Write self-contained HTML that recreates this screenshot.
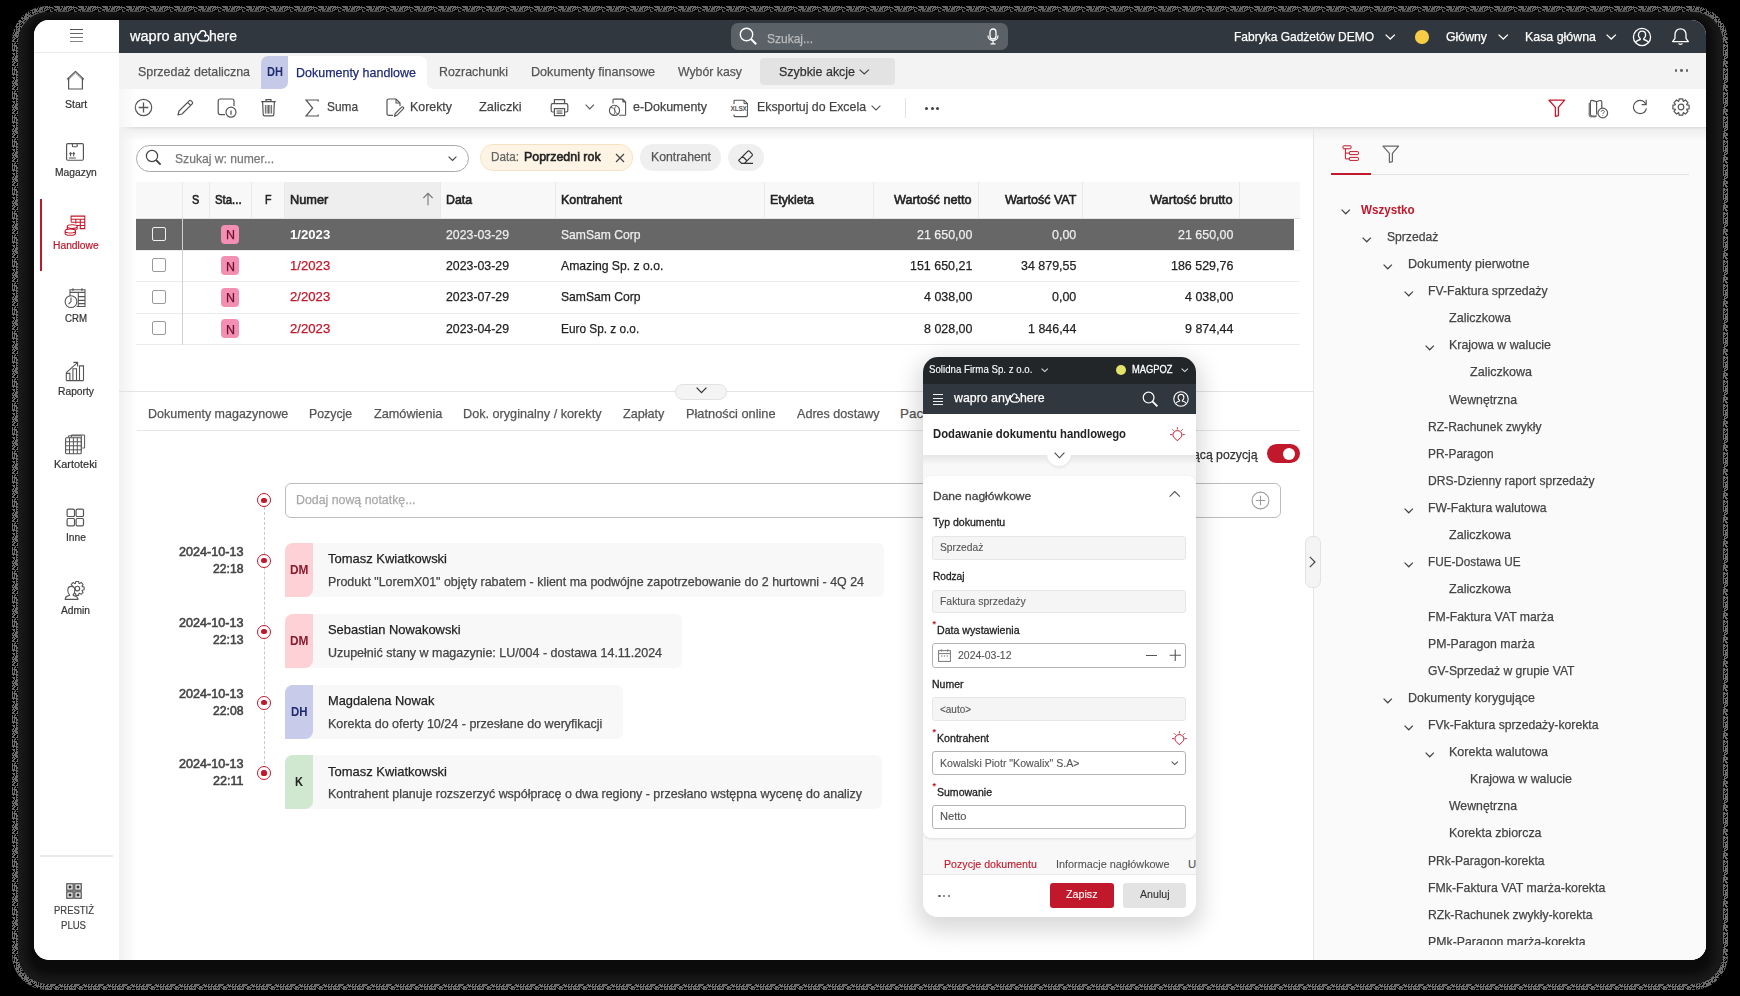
<!DOCTYPE html>
<html><head><meta charset="utf-8"><title>wapro anywhere</title>
<style>
html,body{margin:0;padding:0;background:#000;width:1740px;height:996px;overflow:hidden}
body{position:relative;font-family:"Liberation Sans",sans-serif}
.t{position:absolute;white-space:nowrap;line-height:1;transform-origin:0 0;-webkit-text-stroke:0.25px currentColor;font-family:"Liberation Sans",sans-serif}
svg{overflow:visible}
</style></head><body>
<svg style="position:absolute;left:0;top:0" width="1740" height="996"><defs><pattern id="nz" width="24" height="24" patternUnits="userSpaceOnUse"><rect width="24" height="24" fill="#6c6c6c"/><path d="M0 1h1v1h-1zM0 3h1v1h-1zM0 6h1v1h-1zM0 8h1v1h-1zM0 10h1v1h-1zM0 11h1v1h-1zM0 14h1v1h-1zM0 15h1v1h-1zM0 21h1v1h-1zM1 0h1v1h-1zM1 1h1v1h-1zM1 4h1v1h-1zM1 9h1v1h-1zM1 10h1v1h-1zM1 11h1v1h-1zM1 20h1v1h-1zM2 3h1v1h-1zM2 6h1v1h-1zM2 8h1v1h-1zM2 22h1v1h-1zM3 6h1v1h-1zM3 8h1v1h-1zM3 9h1v1h-1zM3 10h1v1h-1zM3 12h1v1h-1zM3 13h1v1h-1zM3 16h1v1h-1zM3 22h1v1h-1zM4 3h1v1h-1zM4 4h1v1h-1zM4 5h1v1h-1zM4 6h1v1h-1zM4 9h1v1h-1zM4 10h1v1h-1zM4 19h1v1h-1zM5 2h1v1h-1zM5 4h1v1h-1zM5 5h1v1h-1zM5 6h1v1h-1zM5 7h1v1h-1zM5 9h1v1h-1zM5 10h1v1h-1zM5 11h1v1h-1zM5 12h1v1h-1zM5 14h1v1h-1zM5 17h1v1h-1zM5 18h1v1h-1zM5 21h1v1h-1zM6 2h1v1h-1zM6 3h1v1h-1zM6 5h1v1h-1zM6 7h1v1h-1zM6 8h1v1h-1zM6 11h1v1h-1zM6 13h1v1h-1zM6 18h1v1h-1zM6 20h1v1h-1zM7 1h1v1h-1zM7 8h1v1h-1zM7 11h1v1h-1zM7 12h1v1h-1zM7 13h1v1h-1zM7 14h1v1h-1zM7 22h1v1h-1zM7 23h1v1h-1zM8 0h1v1h-1zM8 1h1v1h-1zM8 8h1v1h-1zM8 14h1v1h-1zM8 23h1v1h-1zM9 0h1v1h-1zM9 1h1v1h-1zM9 4h1v1h-1zM9 10h1v1h-1zM9 11h1v1h-1zM9 19h1v1h-1zM9 20h1v1h-1zM9 22h1v1h-1zM10 0h1v1h-1zM10 2h1v1h-1zM10 13h1v1h-1zM10 15h1v1h-1zM10 16h1v1h-1zM10 18h1v1h-1zM11 2h1v1h-1zM11 4h1v1h-1zM11 5h1v1h-1zM11 23h1v1h-1zM12 3h1v1h-1zM12 4h1v1h-1zM12 6h1v1h-1zM12 7h1v1h-1zM12 8h1v1h-1zM12 12h1v1h-1zM12 15h1v1h-1zM12 18h1v1h-1zM13 0h1v1h-1zM13 4h1v1h-1zM13 7h1v1h-1zM13 10h1v1h-1zM13 14h1v1h-1zM13 18h1v1h-1zM13 19h1v1h-1zM13 20h1v1h-1zM13 22h1v1h-1zM13 23h1v1h-1zM14 3h1v1h-1zM14 4h1v1h-1zM14 8h1v1h-1zM14 9h1v1h-1zM14 12h1v1h-1zM14 16h1v1h-1zM14 18h1v1h-1zM15 0h1v1h-1zM15 1h1v1h-1zM15 3h1v1h-1zM15 4h1v1h-1zM15 5h1v1h-1zM15 6h1v1h-1zM15 7h1v1h-1zM15 13h1v1h-1zM15 15h1v1h-1zM15 16h1v1h-1zM15 17h1v1h-1zM15 20h1v1h-1zM15 23h1v1h-1zM16 14h1v1h-1zM16 15h1v1h-1zM16 16h1v1h-1zM16 18h1v1h-1zM16 19h1v1h-1zM16 20h1v1h-1zM17 1h1v1h-1zM17 4h1v1h-1zM17 6h1v1h-1zM17 10h1v1h-1zM17 14h1v1h-1zM17 18h1v1h-1zM17 20h1v1h-1zM17 21h1v1h-1zM17 22h1v1h-1zM18 0h1v1h-1zM18 1h1v1h-1zM18 3h1v1h-1zM18 13h1v1h-1zM18 16h1v1h-1zM18 22h1v1h-1zM19 8h1v1h-1zM19 9h1v1h-1zM19 10h1v1h-1zM19 12h1v1h-1zM19 19h1v1h-1zM20 1h1v1h-1zM20 3h1v1h-1zM20 4h1v1h-1zM20 5h1v1h-1zM20 7h1v1h-1zM20 17h1v1h-1zM20 18h1v1h-1zM20 19h1v1h-1zM20 23h1v1h-1zM21 0h1v1h-1zM21 1h1v1h-1zM21 9h1v1h-1zM21 11h1v1h-1zM21 14h1v1h-1zM21 19h1v1h-1zM21 20h1v1h-1zM21 22h1v1h-1zM22 0h1v1h-1zM22 3h1v1h-1zM22 8h1v1h-1zM22 11h1v1h-1zM22 12h1v1h-1zM22 16h1v1h-1zM22 20h1v1h-1zM22 23h1v1h-1zM23 10h1v1h-1zM23 11h1v1h-1zM23 12h1v1h-1zM23 16h1v1h-1zM23 17h1v1h-1zM23 19h1v1h-1z" fill="#000"/></pattern></defs><rect x="12" y="6" width="1716" height="984" rx="35" fill="url(#nz)"/></svg>
<div style="position:absolute;left:17.5px;top:11.5px;width:1705px;height:972px;border-radius:30px;background:#1a1a1a"></div>
<div style="position:absolute;left:26px;top:14px;width:1688px;height:962px;border-radius:22px;background:#0b0b0b;filter:blur(4px)"></div>
<div id="win" style="position:absolute;left:34px;top:20px;width:1672px;height:940px;border-radius:15px;overflow:hidden;background:#fff">
<div style="position:absolute;left:-34px;top:-20px;width:1740px;height:996px">
<div style="position:absolute;left:34px;top:20px;width:85px;height:940px;background:#fff;"></div>
<div style="position:absolute;left:34px;top:52px;width:85px;height:1px;background:#ececec;"></div>
<div style="position:absolute;left:70px;top:29px;width:13px;height:1.3999999999999986px;background:#555;"></div>
<div style="position:absolute;left:70px;top:33px;width:13px;height:1.3999999999999986px;background:#666;"></div>
<div style="position:absolute;left:70px;top:37px;width:13px;height:1.3999999999999986px;background:#777;"></div>
<div style="position:absolute;left:70px;top:41px;width:13px;height:1.3999999999999986px;background:#888;"></div>
<div style="position:absolute;left:119px;top:53px;width:1587px;height:907px;background:#fff;"></div>
<div style="position:absolute;left:119px;top:20px;width:1587px;height:33px;background:#31373e;"></div>
<span class="t" style="left:129.70px;top:27.75px;font-size:15.5px;color:#fff;transform:scaleX(0.9369);">wapro any</span>
<span class="t" style="left:209.30px;top:27.75px;font-size:15.5px;color:#fff;transform:scaleX(0.9026);">here</span>
<svg style="position:absolute;left:197px;top:31px;" width="12" height="10" viewBox="0 0 12 10" fill="none"><path d="M4.2 9.9 A4 4 0 0 1 2.9 2.2 A2.9 2.9 0 0 1 8.7 3.2 A2.9 2.9 0 0 1 7.9 5.4 M7.6 4.3 A3 3 0 1 1 8 9.9 L4.2 9.9" stroke="#fff" stroke-width="1.4" stroke-linecap="round"/></svg>
<div style="position:absolute;left:731px;top:23px;width:277px;height:27px;border-radius:7px;background:#5b6267"></div>
<svg style="position:absolute;left:739px;top:27px;" width="19" height="19" viewBox="0 0 19 19" fill="none"><circle cx="7.5" cy="7.5" r="6.2" stroke="#fff" stroke-width="1.4"/><path d="M12 12 L17.2 17.2" stroke="#fff" stroke-width="2"/></svg>
<span class="t" style="left:767.00px;top:31.80px;font-size:13.4px;color:#b9bcbe;transform:scaleX(0.8958);">Szukaj...</span>
<svg style="position:absolute;left:987px;top:28px;" width="12" height="17" viewBox="0 0 12 17" fill="none"><rect x="3" y="1" width="6" height="10" rx="3" stroke="#fff" stroke-width="1.3"/><path d="M1 7.5 C1 10.5 3.2 12.5 6 12.5 C8.8 12.5 11 10.5 11 7.5 M6 12.5 V15.5 M3.5 15.8 H8.5" stroke="#fff" stroke-width="1.2"/></svg>
<span class="t" style="left:1234.00px;top:29.80px;font-size:13.4px;color:#fff;transform:scaleX(0.8959);">Fabryka Gadżetów DEMO</span>
<svg style="position:absolute;left:1385px;top:34px;" width="10.5" height="5.6" viewBox="0 0 10.5 5.6" fill="none"><path d="M0.6 0.6 L5.25 5.0 L9.9 0.6" stroke="#fff" stroke-width="1.3"/></svg>
<div style="position:absolute;left:1415px;top:30px;width:13.5px;height:13.5px;border-radius:50%;background:#f8cd46"></div>
<span class="t" style="left:1446.00px;top:29.80px;font-size:13.4px;color:#fff;transform:scaleX(0.9182);">Główny</span>
<svg style="position:absolute;left:1498px;top:34px;" width="10.5" height="5.6" viewBox="0 0 10.5 5.6" fill="none"><path d="M0.6 0.6 L5.25 5.0 L9.9 0.6" stroke="#fff" stroke-width="1.3"/></svg>
<span class="t" style="left:1524.50px;top:29.80px;font-size:13.4px;color:#fff;transform:scaleX(0.9260);">Kasa główna</span>
<svg style="position:absolute;left:1606px;top:34px;" width="10.5" height="5.6" viewBox="0 0 10.5 5.6" fill="none"><path d="M0.6 0.6 L5.25 5.0 L9.9 0.6" stroke="#fff" stroke-width="1.3"/></svg>
<svg style="position:absolute;left:1632px;top:27px;" width="20" height="20" viewBox="0 0 20 20" fill="none"><circle cx="10" cy="10" r="8.6" stroke="#fff" stroke-width="1.3"/><path d="M10 4.2 C7.6 4.2 6.4 6 6.4 8 C6.4 9.8 7.3 11 8.2 11.6 L8.2 12.5 C6.2 13 4.6 13.8 3.6 15.4 M10 4.2 C12.4 4.2 13.6 6 13.6 8 C13.6 9.8 12.7 11 11.8 11.6 L11.8 12.5 C13.8 13 15.4 13.8 16.4 15.4" stroke="#fff" stroke-width="1.3"/></svg>
<svg style="position:absolute;left:1671px;top:27px;" width="19" height="19" viewBox="0 0 19 19" fill="none"><path d="M9.5 1.8 C6 1.8 4 4.4 4 7.6 L4 11.4 L1.6 14.6 L17.4 14.6 L15 11.4 L15 7.6 C15 4.4 13 1.8 9.5 1.8 Z" stroke="#fff" stroke-width="1.3" stroke-linejoin="round"/><path d="M7.6 16.4 C8 17.6 11 17.6 11.4 16.4" stroke="#fff" stroke-width="1.3"/></svg>
<div style="position:absolute;left:119px;top:53px;width:1587px;height:36px;background:#f3f3f3;"></div>
<span class="t" style="left:137.50px;top:64.80px;font-size:13.4px;color:#555;transform:scaleX(0.9288);">Sprzedaż detaliczna</span>
<div style="position:absolute;left:261px;top:56px;width:166px;height:40px;border-radius:7px 7px 0 0;background:#fff"></div>
<div style="position:absolute;left:261px;top:56px;width:27px;height:32.5px;border-radius:7px 0 7px 0;background:#c6cae9"></div>
<div style="position:absolute;left:427px;top:80px;width:9px;height:9px;background:#fff;"></div>
<div style="position:absolute;left:427px;top:70px;width:14px;height:19px;border-radius:0 0 0 7px;background:#f3f3f3"></div>
<span class="t" style="left:267.00px;top:66.30px;font-size:12.4px;color:#1f2a6c;font-weight:700;-webkit-text-stroke:0;transform:scaleX(0.8940);">DH</span>
<span class="t" style="left:296.00px;top:65.50px;font-size:13.4px;color:#1e2a78;transform:scaleX(0.9319);">Dokumenty handlowe</span>
<span class="t" style="left:439.00px;top:64.80px;font-size:13.4px;color:#555;transform:scaleX(0.9271);">Rozrachunki</span>
<span class="t" style="left:531.00px;top:64.80px;font-size:13.4px;color:#555;transform:scaleX(0.9412);">Dokumenty finansowe</span>
<span class="t" style="left:678.00px;top:64.80px;font-size:13.4px;color:#555;transform:scaleX(0.9166);">Wybór kasy</span>
<div style="position:absolute;left:760px;top:58px;width:135px;height:26.5px;border-radius:4px;background:#e3e3e3"></div>
<span class="t" style="left:779.00px;top:64.80px;font-size:13.4px;color:#333;transform:scaleX(0.9283);">Szybkie akcje</span>
<svg style="position:absolute;left:858.5px;top:68.5px;" width="10.5" height="5.6" viewBox="0 0 10.5 5.6" fill="none"><path d="M0.6 0.6 L5.25 5.0 L9.9 0.6" stroke="#444" stroke-width="1.2"/></svg>
<div style="position:absolute;left:1674.6499999999999px;top:69.3px;width:2.3px;height:2.3px;border-radius:50%;background:#666"></div>
<div style="position:absolute;left:1680.35px;top:69.3px;width:2.3px;height:2.3px;border-radius:50%;background:#666"></div>
<div style="position:absolute;left:1686.05px;top:69.3px;width:2.3px;height:2.3px;border-radius:50%;background:#666"></div>
<div style="position:absolute;left:119px;top:89px;width:1587px;height:38px;background:#fff;"></div>
<div style="position:absolute;left:119px;top:127px;width:1587px;height:14px;background:linear-gradient(#dcdcdc 0px,#e6e6e6 1.5px,#f0f0f0 3px,rgba(250,250,250,0) 14px)"></div>
<svg style="position:absolute;left:134px;top:98px;" width="19" height="19" viewBox="0 0 19 19" fill="none"><circle cx="9.5" cy="9.5" r="8.2" stroke="#555" stroke-width="1.2"/><path d="M9.5 4.6 V14.4 M4.6 9.5 H14.4" stroke="#555" stroke-width="1.3"/></svg>
<svg style="position:absolute;left:176px;top:99px;" width="18" height="18" viewBox="0 0 18 18" fill="none"><path d="M2 16 L3 12 L13.2 1.8 C13.8 1.2 14.6 1.2 15.2 1.8 L16.2 2.8 C16.8 3.4 16.8 4.2 16.2 4.8 L6 15 Z M11.6 3.4 L14.6 6.4" stroke="#555" stroke-width="1.2" stroke-linejoin="round"/></svg>
<svg style="position:absolute;left:217px;top:98px;" width="21" height="20" viewBox="0 0 21 20" fill="none"><path d="M8 16.6 H3.2 C2 16.6 1.2 15.8 1.2 14.6 V3 C1.2 1.8 2 1 3.2 1 H15 C16.2 1 17 1.8 17 3 V8" stroke="#555" stroke-width="1.2"/><circle cx="14" cy="14.2" r="5" stroke="#555" stroke-width="1.2"/><path d="M14 12.4 V16.8" stroke="#555" stroke-width="1.3"/></svg>
<svg style="position:absolute;left:260px;top:98px;" width="17" height="19" viewBox="0 0 17 19" fill="none"><path d="M1.2 3.6 H15.8 M6 3.4 V1.6 H11 V3.4 M2.6 3.6 L3.2 16.4 C3.2 17.2 3.8 17.8 4.6 17.8 H12.4 C13.2 17.8 13.8 17.2 13.8 16.4 L14.4 3.6" stroke="#555" stroke-width="1.2"/><path d="M5.4 7 V15.6 M7.1 7 V15.6 M8.5 7 V15.6 M9.9 7 V15.6 M11.6 7 V15.6" stroke="#555" stroke-width="0.9"/></svg>
<svg style="position:absolute;left:305px;top:98.5px;" width="14" height="18" viewBox="0 0 14 18" fill="none"><path d="M13.2 2.4 V1 H1 L7.6 9 L1 17 H13.2 V15.6" stroke="#555" stroke-width="1.2"/></svg>
<span class="t" style="left:327.00px;top:100.20px;font-size:13.4px;color:#444;transform:scaleX(0.8862);">Suma</span>
<svg style="position:absolute;left:386px;top:98px;" width="19" height="19" viewBox="0 0 19 19" fill="none"><path d="M7 17.4 H2.8 C1.8 17.4 1 16.6 1 15.6 V2.8 C1 1.8 1.8 1 2.8 1 H10 L14 5 V8" stroke="#555" stroke-width="1.2"/><path d="M10 1 V5 H14" stroke="#555" stroke-width="1.1"/><path d="M8.6 18.2 L9.2 15.6 L15.6 9.2 C16.1 8.7 16.8 8.7 17.3 9.2 C17.8 9.7 17.8 10.4 17.3 10.9 L10.9 17.3 Z" stroke="#555" stroke-width="1.2"/></svg>
<span class="t" style="left:410.00px;top:100.20px;font-size:13.4px;color:#444;transform:scaleX(0.9252);">Korekty</span>
<span class="t" style="left:479.00px;top:100.20px;font-size:13.4px;color:#444;transform:scaleX(0.9544);">Zaliczki</span>
<svg style="position:absolute;left:550px;top:98px;" width="19" height="19" viewBox="0 0 19 19" fill="none"><path d="M4.4 5.6 V1.6 H14.6 V5.6 M4.2 14 H2.6 C1.8 14 1.2 13.4 1.2 12.6 V7.2 C1.2 6.4 1.8 5.6 2.6 5.6 H16.4 C17.2 5.6 17.8 6.4 17.8 7.2 V12.6 C17.8 13.4 17.2 14 16.4 14 H14.8 M4.4 10.6 H14.6 V17.6 H4.4 Z M6.6 13 H12.4 M6.6 15.2 H12.4" stroke="#555" stroke-width="1.2"/></svg>
<svg style="position:absolute;left:585px;top:104px;" width="9.5" height="5.5" viewBox="0 0 9.5 5.5" fill="none"><path d="M0.6 0.6 L4.75 4.9 L8.9 0.6" stroke="#555" stroke-width="1.1"/></svg>
<svg style="position:absolute;left:608px;top:98px;" width="20" height="20" viewBox="0 0 20 20" fill="none"><path d="M5 5.6 V1.8 C5 1.4 5.3 1.1 5.7 1.1 H14.8 L17.6 3.9 V16.6 C17.6 17 17.3 17.3 16.9 17.3 H11.2 M14.8 1.1 V3.2 C14.8 3.6 15.1 3.9 15.5 3.9 H17.6" stroke="#555" stroke-width="1.1"/><circle cx="6.5" cy="12.4" r="5.1" stroke="#555" stroke-width="1.1"/><path d="M2.6 9.4 C4.6 9.6 6.6 10.6 7 12.2 C7.4 14 6.6 15.6 5.4 17.2 M8.6 7.6 C7.2 8.8 6.2 10.4 6.6 12.4 C7 14 8.4 15.2 9.8 16" stroke="#555" stroke-width="0.9"/></svg>
<span class="t" style="left:633.00px;top:100.20px;font-size:13.4px;color:#444;transform:scaleX(0.9293);">e-Dokumenty</span>
<svg style="position:absolute;left:730px;top:99px;" width="20" height="19" viewBox="0 0 20 19" fill="none"><path d="M4 5 V2.2 C4 1.6 4.4 1.2 5 1.2 H14 L17.4 4.6 V16.6 C17.4 17.2 17 17.6 16.4 17.6 H5 C4.4 17.6 4 17.2 4 16.6 V15.4" stroke="#555" stroke-width="1.1"/><path d="M14 1.2 V4.6 H17.4" stroke="#555" stroke-width="1"/></svg>
<div style="position:absolute;left:730px;top:105px;font:bold 6.5px 'Liberation Sans',sans-serif;color:#555;letter-spacing:-0.2px;background:#fff;line-height:7px;padding:0 0.5px">XLSX</div>
<span class="t" style="left:757.00px;top:100.20px;font-size:13.4px;color:#444;transform:scaleX(0.9210);">Eksportuj do Excela</span>
<svg style="position:absolute;left:871px;top:104.5px;" width="10" height="5.5" viewBox="0 0 10 5.5" fill="none"><path d="M0.6 0.6 L5.0 4.9 L9.4 0.6" stroke="#555" stroke-width="1.1"/></svg>
<div style="position:absolute;left:905px;top:97.5px;width:1px;height:20.0px;background:#e2e2e2;"></div>
<div style="position:absolute;left:925.0px;top:106.5px;width:3px;height:3px;border-radius:50%;background:#444"></div>
<div style="position:absolute;left:930.5px;top:106.5px;width:3px;height:3px;border-radius:50%;background:#444"></div>
<div style="position:absolute;left:936.0px;top:106.5px;width:3px;height:3px;border-radius:50%;background:#444"></div>
<svg style="position:absolute;left:1548px;top:98.5px;" width="18" height="18" viewBox="0 0 18 18" fill="none"><path d="M1 1.2 H16.6 L10.4 8.4 V16.6 L7.4 17.4 V8.4 Z" stroke="#c1182b" stroke-width="1.3" stroke-linejoin="round"/></svg>
<svg style="position:absolute;left:1588px;top:98.5px;" width="21" height="19" viewBox="0 0 21 19" fill="none"><path d="M2.4 3 V15.6 C2.4 16.6 3.2 17 4 17 H9 M2.4 3 C2.4 1.6 3.8 1.2 5 1.6 L8.6 2.8 V15.6 M8.6 2.8 L11 1.8 C12.4 1.2 13.8 1.6 13.8 3 V9.6" stroke="#555" stroke-width="1.2"/><path d="M1.2 4 V16.6 C1.2 17.4 1.8 17.8 2.6 17.8 H8" stroke="#555" stroke-width="1"/><circle cx="14.8" cy="14" r="4.8" stroke="#555" stroke-width="1.2"/><path d="M13.2 12.8 C13.2 11.8 13.9 11.3 14.8 11.3 C15.7 11.3 16.4 11.9 16.4 12.7 C16.4 13.7 14.8 13.8 14.8 15 M14.8 16.2 V16.9" stroke="#555" stroke-width="1"/></svg>
<svg style="position:absolute;left:1632px;top:99px;" width="16" height="16" viewBox="0 0 16 16" fill="none"><path d="M13.6 5 C12.4 2.6 10.4 1.4 8 1.4 C4.4 1.4 1.4 4.4 1.4 8 C1.4 11.6 4.4 14.6 8 14.6 C11.2 14.6 13.8 12.4 14.4 9.4" stroke="#555" stroke-width="1.2"/><path d="M14.2 0.8 V5.6 H9.6" stroke="#555" stroke-width="1.2"/></svg>
<svg style="position:absolute;left:1672px;top:98px;" width="18" height="18" viewBox="0 0 18 18" fill="none"><path d="M17.10 7.19 L17.10 10.81 L14.80 11.18 L14.65 11.56 L16.01 13.45 L13.45 16.01 L11.56 14.65 L11.18 14.80 L10.81 17.10 L7.19 17.10 L6.82 14.80 L6.44 14.65 L4.55 16.01 L1.99 13.45 L3.35 11.56 L3.20 11.18 L0.90 10.81 L0.90 7.19 L3.20 6.82 L3.35 6.44 L1.99 4.55 L4.55 1.99 L6.44 3.35 L6.82 3.20 L7.19 0.90 L10.81 0.90 L11.18 3.20 L11.56 3.35 L13.45 1.99 L16.01 4.55 L14.65 6.44 L14.80 6.82 Z" stroke="#555" stroke-width="1.2" stroke-linejoin="round"/><circle cx="9" cy="9" r="2.8" stroke="#555" stroke-width="1.2"/></svg>
<svg style="position:absolute;left:66px;top:70px;" width="19" height="20" viewBox="0 0 19 20" fill="none"><path d="M1 9.4 L9.5 1.4 L18 9.4 M2.6 8 V19 H16.4 V8" stroke="#555" stroke-width="1.2" stroke-linejoin="round"/><path d="M1.8 10.4 L9.5 3 L17.2 10.4" stroke="#555" stroke-width="0.7"/></svg>
<span class="t" style="left:64.85px;top:99.80px;font-size:10px;color:#333;-webkit-text-stroke:0.2px currentColor;transform:scaleX(1.0560);">Start</span>
<svg style="position:absolute;left:66px;top:143.1px;" width="18" height="18" viewBox="0 0 18 18" fill="none"><rect x="0.6" y="0.6" width="16.8" height="16.6" rx="1.2" stroke="#555" stroke-width="1.15"/><path d="M6.4 0.8 V3 C6.4 3.5 6.7 3.8 7.2 3.8 H10.4 C10.9 3.8 11.2 3.5 11.2 3 V0.8" stroke="#555" stroke-width="1.1"/><path d="M4.6 13.3 V9.8 M7.7 13.3 V9.8 M3.5 11 L4.6 9.6 L5.7 11 M6.6 11 L7.7 9.6 L8.8 11" stroke="#555" stroke-width="1.1"/><path d="M3.4 15 H9.4" stroke="#555" stroke-width="1.2" stroke-linecap="round"/></svg>
<span class="t" style="left:54.80px;top:167.80px;font-size:10px;color:#333;-webkit-text-stroke:0.2px currentColor;transform:scaleX(1.0302);">Magazyn</span>
<svg style="position:absolute;left:64px;top:215px;" width="22" height="21" viewBox="0 0 22 21" fill="none"><path d="M7.1 6.8 V1.1 H20.8 V13.6 H15.6 M7.1 4.3 H20.8 M7.1 7.3 H20.8 M11.8 4.3 V8.6 M16.3 4.3 V13.6 M13 10.4 H20.8" stroke="#c1182b" stroke-width="1.05"/><path d="M3.2 11.6 V13.4 C3.2 14.5 5.4 15.3 8.2 15.3 C11 15.3 13.2 14.5 13.2 13.4 V11.6 C13.2 10.5 11 9.7 8.2 9.7 C5.4 9.7 3.2 10.5 3.2 11.6 C3.2 12.7 5.4 13.5 8.2 13.5 C11 13.5 13.2 12.7 13.2 11.6" fill="#fff" stroke="#c1182b" stroke-width="1.05"/><path d="M1.1 15.9 V18.2 C1.1 19.3 3.4 20.3 6.3 20.3 C9.2 20.3 11.5 19.3 11.5 18.2 V15.9 C11.5 14.8 9.2 13.9 6.3 13.9 C3.4 13.9 1.1 14.8 1.1 15.9 C1.1 17 3.4 17.9 6.3 17.9 C9.2 17.9 11.5 17 11.5 15.9" fill="#fff" stroke="#c1182b" stroke-width="1.05"/></svg>
<span class="t" style="left:52.75px;top:240.50px;font-size:10px;color:#c1182b;-webkit-text-stroke:0.2px currentColor;transform:scaleX(1.0276);">Handlowe</span>
<div style="position:absolute;left:40px;top:199px;width:2px;height:72px;background:#c1182b;"></div>
<svg style="position:absolute;left:64px;top:288px;" width="22" height="21" viewBox="0 0 22 21" fill="none"><path d="M6 8 V1.8 H21 V18.5 H12.6 M6 4.4 H21 M9 0.2 V3 M18 0.2 V3 M14.3 4.4 V18.5 M14.3 8.6 H21 M14.3 12.4 H21 M14.3 15.6 H21" stroke="#555" stroke-width="1.1"/><circle cx="7" cy="13.6" r="5.9" fill="#fff" stroke="#555" stroke-width="1.1"/><path d="M7 9.4 V13.6 L4.6 16.2" stroke="#555" stroke-width="1.1"/></svg>
<span class="t" style="left:64.50px;top:313.50px;font-size:10px;color:#333;-webkit-text-stroke:0.2px currentColor;transform:scaleX(0.9660);">CRM</span>
<svg style="position:absolute;left:65px;top:361px;" width="21" height="21" viewBox="0 0 21 21" fill="none"><path d="M1.3 19.6 V12.4 H4.9 V19.6 M7.9 19.6 V7.8 H11.5 V19.6 M14.5 19.6 V4.9 H18.5 V19.6 M1.3 19.6 H18.5 M1.3 11.6 L12.2 1.8 M8.4 1.4 H12.6 V5.6" stroke="#555" stroke-width="1.1"/></svg>
<span class="t" style="left:57.50px;top:386.50px;font-size:10px;color:#333;-webkit-text-stroke:0.2px currentColor;transform:scaleX(1.0281);">Raporty</span>
<svg style="position:absolute;left:65px;top:434px;" width="21" height="21" viewBox="0 0 21 21" fill="none"><path d="M6.4 3.4 V1 H19.6 V14 H17.4 M3.4 3.8 V1.8 H16.4 V16.2 H16.2" stroke="#555" stroke-width="1"/><rect x="0.6" y="3.8" width="15.6" height="16" rx="1" fill="#fff" stroke="#555" stroke-width="1.1"/><path d="M0.6 7.8 H16.2 M0.6 11.8 H16.2 M0.6 15.8 H16.2 M4.5 3.8 V19.8 M8.4 3.8 V19.8 M12.3 3.8 V19.8" stroke="#555" stroke-width="1"/></svg>
<span class="t" style="left:54.00px;top:459.50px;font-size:10px;color:#333;-webkit-text-stroke:0.2px currentColor;transform:scaleX(1.0896);">Kartoteki</span>
<svg style="position:absolute;left:65.5px;top:507.5px;" width="19" height="19" viewBox="0 0 19 19" fill="none"><rect x="1.1" y="1.1" width="7.4" height="7.4" rx="1.3" stroke="#555" stroke-width="1.2"/><rect x="10.1" y="1.1" width="7.4" height="7.4" rx="1.3" stroke="#555" stroke-width="1.2"/><rect x="1.1" y="10.5" width="7.4" height="7.4" rx="1.3" stroke="#555" stroke-width="1.2"/><rect x="10.1" y="10.5" width="7.4" height="7.4" rx="1.3" stroke="#555" stroke-width="1.2"/></svg>
<span class="t" style="left:65.50px;top:532.50px;font-size:10px;color:#333;-webkit-text-stroke:0.2px currentColor;transform:scaleX(1.0276);">Inne</span>
<svg style="position:absolute;left:64px;top:579px;" width="22" height="22" viewBox="0 0 22 22" fill="none"><path d="M20.16 7.99 L20.16 10.81 L18.20 11.17 L17.98 11.68 L19.12 13.32 L17.12 15.32 L15.48 14.18 L14.97 14.40 L14.61 16.36 L11.79 16.36 L11.43 14.40 L10.92 14.18 L9.28 15.32 L7.28 13.32 L8.42 11.68 L8.20 11.17 L6.24 10.81 L6.24 7.99 L8.20 7.63 L8.42 7.12 L7.28 5.48 L9.28 3.48 L10.92 4.62 L11.43 4.40 L11.79 2.44 L14.61 2.44 L14.97 4.40 L15.48 4.62 L17.12 3.48 L19.12 5.48 L17.98 7.12 L18.20 7.63 Z" fill="#fff" stroke="#555" stroke-width="1.05" stroke-linejoin="round"/><circle cx="13.4" cy="9.6" r="2.3" stroke="#555" stroke-width="1.1"/><path d="M5.4 15.4 C4 14.4 3.8 12.6 3.8 11.2 C3.8 9 5.2 7.4 7.3 7.4 C9.4 7.4 10.8 9 10.8 11.2 C10.8 12.6 10.6 14.4 9.2 15.4 V16.4 C11.6 16.9 13.8 17.8 14 20.4 H1.2 C1.2 17.8 3 16.9 5.4 16.4 Z" fill="#fff" stroke="#555" stroke-width="1.1" stroke-linejoin="round"/></svg>
<span class="t" style="left:61.00px;top:605.50px;font-size:10px;color:#333;-webkit-text-stroke:0.2px currentColor;transform:scaleX(1.0231);">Admin</span>
<div style="position:absolute;left:40px;top:855px;width:73px;height:1.5px;background:#eaeaea;"></div>
<svg style="position:absolute;left:66px;top:883px;" width="16" height="16" viewBox="0 0 16 16" fill="none"><rect x="0.8" y="0.8" width="6.4" height="6.4" stroke="#555" stroke-width="1.3"/><rect x="8.8" y="0.8" width="6.4" height="6.4" stroke="#555" stroke-width="1.3"/><rect x="0.8" y="8.8" width="6.4" height="6.4" stroke="#555" stroke-width="1.3"/><rect x="8.8" y="8.8" width="6.4" height="6.4" stroke="#555" stroke-width="1.3"/><rect x="2.6" y="2.6" width="2.8" height="2.8" fill="#333"/><rect x="10.6" y="2.6" width="2.8" height="2.8" fill="#333"/><rect x="2.6" y="10.6" width="2.8" height="2.8" fill="#333"/><rect x="10.6" y="10.6" width="2.8" height="2.8" fill="#333"/></svg>
<span class="t" style="left:53.50px;top:906.00px;font-size:10px;color:#444;-webkit-text-stroke:0.2px currentColor;transform:scaleX(0.9473);">PRESTIŻ</span>
<span class="t" style="left:60.50px;top:920.50px;font-size:10px;color:#444;-webkit-text-stroke:0.2px currentColor;transform:scaleX(0.9570);">PLUS</span>
<div style="position:absolute;left:119px;top:127px;width:18px;height:833px;background:linear-gradient(90deg,#f1f1f1,rgba(255,255,255,0))"></div>
<div style="position:absolute;left:119px;top:89px;width:18px;height:38px;background:linear-gradient(90deg,#f6f6f6,rgba(255,255,255,0))"></div>
<div style="position:absolute;left:136px;top:145px;width:331px;height:25px;border:1px solid #a9a9a9;border-radius:14px;background:#fff"></div>
<svg style="position:absolute;left:145px;top:149px;" width="18" height="18" viewBox="0 0 18 18" fill="none"><circle cx="7" cy="7" r="5.6" stroke="#444" stroke-width="1.2"/><path d="M11 11 L15.6 15.6" stroke="#444" stroke-width="1.9"/></svg>
<span class="t" style="left:175.00px;top:151.70px;font-size:13.4px;color:#777;transform:scaleX(0.9049);">Szukaj w: numer...</span>
<svg style="position:absolute;left:448px;top:155.5px;" width="9" height="5" viewBox="0 0 9 5" fill="none"><path d="M0.6 0.6 L4.5 4.4 L8.4 0.6" stroke="#444" stroke-width="1.1"/></svg>
<div style="position:absolute;left:480px;top:144px;width:151px;height:24.5px;border:1px solid #f5e2c2;border-radius:13px;background:#fdf4e5"></div>
<span class="t" style="left:491.00px;top:150.20px;font-size:13.4px;color:#666;transform:scaleX(0.8749);">Data:</span>
<span class="t" style="left:524.00px;top:150.20px;font-size:13.4px;color:#222;-webkit-text-stroke:0.6px currentColor;transform:scaleX(0.9271);">Poprzedni rok</span>
<svg style="position:absolute;left:615px;top:153px;" width="10" height="10" viewBox="0 0 10 10" fill="none"><path d="M1 1 L9 9 M9 1 L1 9" stroke="#444" stroke-width="1.2"/></svg>
<div style="position:absolute;left:640px;top:144px;width:81px;height:26.5px;border-radius:13px;background:#efefef"></div>
<span class="t" style="left:651.00px;top:150.20px;font-size:13.4px;color:#555;transform:scaleX(0.9158);">Kontrahent</span>
<div style="position:absolute;left:728px;top:144px;width:35.5px;height:27px;border-radius:14px;background:#efefef"></div>
<svg style="position:absolute;left:736px;top:148px;" width="19" height="19" viewBox="0 0 19 19" fill="none"><path d="M3.4 11.6 L11.6 3.4 C12.2 2.8 13 2.8 13.6 3.4 L16 5.8 C16.6 6.4 16.6 7.2 16 7.8 L8.4 15.4 H5.6 L2.8 12.6 C2.6 12.4 2.8 12 3.4 11.6 Z M6.6 8.4 L11.2 13 M8.8 15.4 H17" stroke="#333" stroke-width="1.2" stroke-linejoin="round"/></svg>
<div style="position:absolute;left:136px;top:182px;width:1164px;height:36px;background:#f8f8f8;"></div>
<div style="position:absolute;left:284px;top:182px;width:156px;height:36px;background:#eeeeee;"></div>
<div style="position:absolute;left:182px;top:182px;width:1px;height:36px;background:#e9e9e9;"></div>
<div style="position:absolute;left:209px;top:182px;width:1px;height:36px;background:#e9e9e9;"></div>
<div style="position:absolute;left:250.5px;top:182px;width:1.0px;height:36px;background:#e9e9e9;"></div>
<div style="position:absolute;left:284px;top:182px;width:1px;height:36px;background:#e9e9e9;"></div>
<div style="position:absolute;left:440px;top:182px;width:1px;height:36px;background:#e9e9e9;"></div>
<div style="position:absolute;left:555px;top:182px;width:1px;height:36px;background:#e9e9e9;"></div>
<div style="position:absolute;left:764px;top:182px;width:1px;height:36px;background:#e9e9e9;"></div>
<div style="position:absolute;left:873px;top:182px;width:1px;height:36px;background:#e9e9e9;"></div>
<div style="position:absolute;left:977.5px;top:182px;width:1.0px;height:36px;background:#e9e9e9;"></div>
<div style="position:absolute;left:1081.5px;top:182px;width:1.0px;height:36px;background:#e9e9e9;"></div>
<div style="position:absolute;left:1238.5px;top:182px;width:1.0px;height:36px;background:#e9e9e9;"></div>
<div style="position:absolute;left:136px;top:217.5px;width:1164px;height:1.0px;background:#e2e2e2;"></div>
<span class="t" style="left:192.20px;top:192.80px;font-size:13.4px;color:#222;-webkit-text-stroke:0.6px currentColor;transform:scaleX(0.8173);">S</span>
<span class="t" style="left:215.00px;top:192.80px;font-size:13.4px;color:#222;-webkit-text-stroke:0.6px currentColor;transform:scaleX(0.8509);">Sta...</span>
<span class="t" style="left:264.50px;top:192.80px;font-size:13.4px;color:#222;-webkit-text-stroke:0.6px currentColor;transform:scaleX(0.7947);">F</span>
<span class="t" style="left:289.60px;top:192.80px;font-size:13.4px;color:#222;-webkit-text-stroke:0.6px currentColor;transform:scaleX(0.9532);">Numer</span>
<svg style="position:absolute;left:422px;top:192px;" width="12" height="14" viewBox="0 0 12 14" fill="none"><path d="M6 13.2 V1.4 M1.4 6 L6 1.4 L10.6 6" stroke="#777" stroke-width="1.1"/></svg>
<span class="t" style="left:446.00px;top:192.80px;font-size:13.4px;color:#222;-webkit-text-stroke:0.6px currentColor;transform:scaleX(0.9192);">Data</span>
<span class="t" style="left:561.00px;top:192.80px;font-size:13.4px;color:#222;-webkit-text-stroke:0.6px currentColor;transform:scaleX(0.9311);">Kontrahent</span>
<span class="t" style="left:769.70px;top:192.80px;font-size:13.4px;color:#222;-webkit-text-stroke:0.6px currentColor;transform:scaleX(0.9237);">Etykieta</span>
<span class="t" style="left:894.20px;top:192.80px;font-size:13.4px;color:#222;-webkit-text-stroke:0.6px currentColor;transform:scaleX(0.9451);">Wartość netto</span>
<span class="t" style="left:1004.60px;top:192.80px;font-size:13.4px;color:#222;-webkit-text-stroke:0.6px currentColor;transform:scaleX(0.9348);">Wartość VAT</span>
<span class="t" style="left:1150.00px;top:192.80px;font-size:13.4px;color:#222;-webkit-text-stroke:0.6px currentColor;transform:scaleX(0.9530);">Wartość brutto</span>
<div style="position:absolute;left:136px;top:218.5px;width:1158px;height:31.0px;background:#676767;"></div>
<div style="position:absolute;left:136px;top:249.5px;width:1164px;height:1.0px;background:#ebebeb;"></div>
<div style="position:absolute;left:152px;top:226.7px;width:12px;height:12px;border:1.2px solid #f2f2f2;border-radius:2px"></div>
<div style="position:absolute;left:221px;top:224.8px;width:18px;height:19px;border-radius:4px;background:#f28fb3"></div>
<span class="t" style="left:225.50px;top:229.15px;font-size:12.4px;color:#6d0f2a;transform:scaleX(1.0058);">N</span>
<span class="t" style="left:289.60px;top:227.55px;font-size:13.4px;color:#fff;font-weight:700;-webkit-text-stroke:0;transform:scaleX(0.9815);">1/2023</span>
<span class="t" style="left:446.00px;top:227.55px;font-size:13.4px;color:#eeeeee;transform:scaleX(0.9198);">2023-03-29</span>
<span class="t" style="left:561.00px;top:227.55px;font-size:13.4px;color:#eeeeee;transform:scaleX(0.9054);">SamSam Corp</span>
<span class="t" style="left:916.60px;top:227.55px;font-size:13.4px;color:#eeeeee;transform:scaleX(0.9300);">21 650,00</span>
<span class="t" style="left:1051.76px;top:227.55px;font-size:13.4px;color:#eeeeee;transform:scaleX(0.9300);">0,00</span>
<span class="t" style="left:1177.60px;top:227.55px;font-size:13.4px;color:#eeeeee;transform:scaleX(0.9300);">21 650,00</span>
<div style="position:absolute;left:136px;top:280.8px;width:1164px;height:1.0px;background:#ebebeb;"></div>
<div style="position:absolute;left:152px;top:258.0px;width:12px;height:12px;border:1.2px solid #9a9a9a;border-radius:2px"></div>
<div style="position:absolute;left:221px;top:256.1px;width:18px;height:19px;border-radius:4px;background:#f28fb3"></div>
<span class="t" style="left:225.50px;top:260.55px;font-size:12.4px;color:#6d0f2a;transform:scaleX(1.0058);">N</span>
<span class="t" style="left:289.60px;top:258.95px;font-size:13.4px;color:#c1182b;transform:scaleX(0.9815);">1/2023</span>
<span class="t" style="left:446.00px;top:258.95px;font-size:13.4px;color:#222;transform:scaleX(0.9198);">2023-03-29</span>
<span class="t" style="left:561.00px;top:258.95px;font-size:13.4px;color:#222;transform:scaleX(0.9111);">Amazing Sp. z o.o.</span>
<span class="t" style="left:909.67px;top:258.95px;font-size:13.4px;color:#222;transform:scaleX(0.9300);">151 650,21</span>
<span class="t" style="left:1020.60px;top:258.95px;font-size:13.4px;color:#222;transform:scaleX(0.9300);">34 879,55</span>
<span class="t" style="left:1170.67px;top:258.95px;font-size:13.4px;color:#222;transform:scaleX(0.9300);">186 529,76</span>
<div style="position:absolute;left:136px;top:312.5px;width:1164px;height:1.0px;background:#ebebeb;"></div>
<div style="position:absolute;left:152px;top:289.5px;width:12px;height:12px;border:1.2px solid #9a9a9a;border-radius:2px"></div>
<div style="position:absolute;left:221px;top:287.6px;width:18px;height:19px;border-radius:4px;background:#f28fb3"></div>
<span class="t" style="left:225.50px;top:292.05px;font-size:12.4px;color:#6d0f2a;transform:scaleX(1.0058);">N</span>
<span class="t" style="left:289.60px;top:290.45px;font-size:13.4px;color:#c1182b;transform:scaleX(0.9815);">2/2023</span>
<span class="t" style="left:446.00px;top:290.45px;font-size:13.4px;color:#222;transform:scaleX(0.9198);">2023-07-29</span>
<span class="t" style="left:561.00px;top:290.45px;font-size:13.4px;color:#222;transform:scaleX(0.9054);">SamSam Corp</span>
<span class="t" style="left:923.52px;top:290.45px;font-size:13.4px;color:#222;transform:scaleX(0.9300);">4 038,00</span>
<span class="t" style="left:1051.76px;top:290.45px;font-size:13.4px;color:#222;transform:scaleX(0.9300);">0,00</span>
<span class="t" style="left:1184.52px;top:290.45px;font-size:13.4px;color:#222;transform:scaleX(0.9300);">4 038,00</span>
<div style="position:absolute;left:136px;top:344.0px;width:1164px;height:1.0px;background:#ebebeb;"></div>
<div style="position:absolute;left:152px;top:321.1px;width:12px;height:12px;border:1.2px solid #9a9a9a;border-radius:2px"></div>
<div style="position:absolute;left:221px;top:319.2px;width:18px;height:19px;border-radius:4px;background:#f28fb3"></div>
<span class="t" style="left:225.50px;top:323.65px;font-size:12.4px;color:#6d0f2a;transform:scaleX(1.0058);">N</span>
<span class="t" style="left:289.60px;top:322.05px;font-size:13.4px;color:#c1182b;transform:scaleX(0.9815);">2/2023</span>
<span class="t" style="left:446.00px;top:322.05px;font-size:13.4px;color:#222;transform:scaleX(0.9198);">2023-04-29</span>
<span class="t" style="left:561.00px;top:322.05px;font-size:13.4px;color:#222;transform:scaleX(0.8829);">Euro Sp. z o.o.</span>
<span class="t" style="left:923.52px;top:322.05px;font-size:13.4px;color:#222;transform:scaleX(0.9300);">8 028,00</span>
<span class="t" style="left:1027.52px;top:322.05px;font-size:13.4px;color:#222;transform:scaleX(0.9300);">1 846,44</span>
<span class="t" style="left:1184.52px;top:322.05px;font-size:13.4px;color:#222;transform:scaleX(0.9300);">9 874,44</span>
<div style="position:absolute;left:182px;top:218px;width:1.1999999999999886px;height:126.5px;background:#d0d0d0;"></div>
<div style="position:absolute;left:119px;top:391px;width:1194px;height:1px;background:#e3e3e3;"></div>
<div style="position:absolute;left:674.5px;top:383.5px;width:50px;height:14px;border:1px solid #e2e2e2;border-radius:8px;background:#f4f4f4"></div>
<svg style="position:absolute;left:696px;top:386.8px;" width="11" height="6.2" viewBox="0 0 11 6.2" fill="none"><path d="M0.6 0.6 L5.5 5.6000000000000005 L10.4 0.6" stroke="#333" stroke-width="1.3"/></svg>
<span class="t" style="left:148.00px;top:406.80px;font-size:13.4px;color:#555;transform:scaleX(0.9325);">Dokumenty magazynowe</span>
<span class="t" style="left:309.30px;top:406.80px;font-size:13.4px;color:#555;transform:scaleX(0.9214);">Pozycje</span>
<span class="t" style="left:373.70px;top:406.80px;font-size:13.4px;color:#555;transform:scaleX(0.9461);">Zamówienia</span>
<span class="t" style="left:463.30px;top:406.80px;font-size:13.4px;color:#555;transform:scaleX(0.9447);">Dok. oryginalny / korekty</span>
<span class="t" style="left:623.00px;top:406.80px;font-size:13.4px;color:#555;transform:scaleX(0.9428);">Zapłaty</span>
<span class="t" style="left:686.00px;top:406.80px;font-size:13.4px;color:#555;transform:scaleX(0.9553);">Płatności online</span>
<span class="t" style="left:797.00px;top:406.80px;font-size:13.4px;color:#555;transform:scaleX(0.9394);">Adres dostawy</span>
<span class="t" style="left:900.00px;top:406.80px;font-size:13.4px;color:#555;">Paczki</span>
<div style="position:absolute;left:137px;top:430px;width:1163px;height:1px;background:#e6e6e6;"></div>
<span class="t" style="left:1160.98px;top:447.80px;font-size:13.4px;color:#333;transform:scaleX(0.9141);">z bieżącą pozycją</span>
<div style="position:absolute;left:1267px;top:444px;width:33px;height:18.5px;border-radius:10px;background:#c1182b"></div>
<div style="position:absolute;left:1283px;top:447.5px;width:12px;height:12px;border-radius:50%;background:#fff"></div>
<div style="position:absolute;left:285px;top:483px;width:994px;height:33px;border:1px solid #bdbdbd;border-radius:6px;background:#fff"></div>
<span class="t" style="left:296.00px;top:492.80px;font-size:13.4px;color:#a8a8a8;transform:scaleX(0.9226);">Dodaj nową notatkę...</span>
<svg style="position:absolute;left:1251px;top:491px;" width="19" height="19" viewBox="0 0 19 19" fill="none"><circle cx="9.5" cy="9.5" r="8.4" stroke="#9a9a9a" stroke-width="1.1"/><path d="M9.5 4.8 V14.2 M4.8 9.5 H14.2" stroke="#9a9a9a" stroke-width="1.1"/></svg>
<div style="position:absolute;left:263.5px;top:507px;width:0;height:272px;border-left:1px dashed #c8c8c8"></div>
<div style="position:absolute;left:257px;top:493.2px;width:12px;height:12px;border:1.2px solid #c1182b;border-radius:50%;background:#fff"></div>
<div style="position:absolute;left:261.4px;top:497.59999999999997px;width:5.2px;height:5.2px;border-radius:50%;background:#c1182b"></div>
<div style="position:absolute;left:285px;top:543px;width:599px;height:54px;border-radius:8px 6px 6px 8px;background:#f8f8f8"></div>
<div style="position:absolute;left:285px;top:543px;width:27.5px;height:54px;border-radius:8px 0 8px 0;background:#fdd1d6"></div>
<span class="t" style="left:289.55px;top:563.80px;font-size:12.4px;color:#8a1a2b;font-weight:700;-webkit-text-stroke:0;transform:scaleX(0.9549);">DM</span>
<span class="t" style="left:328.20px;top:552.30px;font-size:13.4px;color:#222;transform:scaleX(0.9692);">Tomasz Kwiatkowski</span>
<span class="t" style="left:328.20px;top:575.80px;font-size:12.4px;color:#444;transform:scaleX(1.0032);">Produkt &quot;LoremX01&quot; objęty rabatem - klient ma podwójne zapotrzebowanie do 2 hurtowni - 4Q 24</span>
<span class="t" style="left:178.60px;top:544.50px;font-size:13.4px;color:#444;-webkit-text-stroke:0.6px currentColor;transform:scaleX(0.9417);">2024-10-13</span>
<span class="t" style="left:212.60px;top:561.80px;font-size:13.4px;color:#444;-webkit-text-stroke:0.6px currentColor;transform:scaleX(0.9102);">22:18</span>
<div style="position:absolute;left:257px;top:553.6px;width:12px;height:12px;border:1.2px solid #c1182b;border-radius:50%;background:#fff"></div>
<div style="position:absolute;left:261.4px;top:558.0px;width:5.2px;height:5.2px;border-radius:50%;background:#c1182b"></div>
<div style="position:absolute;left:285px;top:614px;width:397px;height:54px;border-radius:8px 6px 6px 8px;background:#f8f8f8"></div>
<div style="position:absolute;left:285px;top:614px;width:27.5px;height:54px;border-radius:8px 0 8px 0;background:#fdd1d6"></div>
<span class="t" style="left:289.55px;top:634.80px;font-size:12.4px;color:#8a1a2b;font-weight:700;-webkit-text-stroke:0;transform:scaleX(0.9549);">DM</span>
<span class="t" style="left:328.20px;top:623.30px;font-size:13.4px;color:#222;transform:scaleX(0.9637);">Sebastian Nowakowski</span>
<span class="t" style="left:328.20px;top:646.80px;font-size:12.4px;color:#444;transform:scaleX(1.0068);">Uzupełnić stany w magazynie: LU/004 - dostawa 14.11.2024</span>
<span class="t" style="left:178.60px;top:615.50px;font-size:13.4px;color:#444;-webkit-text-stroke:0.6px currentColor;transform:scaleX(0.9417);">2024-10-13</span>
<span class="t" style="left:212.60px;top:632.80px;font-size:13.4px;color:#444;-webkit-text-stroke:0.6px currentColor;transform:scaleX(0.9102);">22:13</span>
<div style="position:absolute;left:257px;top:624.6px;width:12px;height:12px;border:1.2px solid #c1182b;border-radius:50%;background:#fff"></div>
<div style="position:absolute;left:261.4px;top:629.0px;width:5.2px;height:5.2px;border-radius:50%;background:#c1182b"></div>
<div style="position:absolute;left:285px;top:685px;width:338px;height:54px;border-radius:8px 6px 6px 8px;background:#f8f8f8"></div>
<div style="position:absolute;left:285px;top:685px;width:27.5px;height:54px;border-radius:8px 0 8px 0;background:#c8cbea"></div>
<span class="t" style="left:290.50px;top:705.80px;font-size:12.4px;color:#1f2a6c;font-weight:700;-webkit-text-stroke:0;transform:scaleX(0.9220);">DH</span>
<span class="t" style="left:328.20px;top:694.30px;font-size:13.4px;color:#222;transform:scaleX(0.9584);">Magdalena Nowak</span>
<span class="t" style="left:328.20px;top:717.80px;font-size:12.4px;color:#444;transform:scaleX(1.0112);">Korekta do oferty 10/24 - przesłane do weryfikacji</span>
<span class="t" style="left:178.60px;top:686.50px;font-size:13.4px;color:#444;-webkit-text-stroke:0.6px currentColor;transform:scaleX(0.9417);">2024-10-13</span>
<span class="t" style="left:212.60px;top:703.80px;font-size:13.4px;color:#444;-webkit-text-stroke:0.6px currentColor;transform:scaleX(0.9102);">22:08</span>
<div style="position:absolute;left:257px;top:695.6px;width:12px;height:12px;border:1.2px solid #c1182b;border-radius:50%;background:#fff"></div>
<div style="position:absolute;left:261.4px;top:700.0px;width:5.2px;height:5.2px;border-radius:50%;background:#c1182b"></div>
<div style="position:absolute;left:285px;top:755.4px;width:597px;height:54px;border-radius:8px 6px 6px 8px;background:#f8f8f8"></div>
<div style="position:absolute;left:285px;top:755.4px;width:27.5px;height:54px;border-radius:8px 0 8px 0;background:#cfe8cf"></div>
<span class="t" style="left:294.75px;top:776.20px;font-size:12.4px;color:#222;font-weight:700;-webkit-text-stroke:0;transform:scaleX(0.8940);">K</span>
<span class="t" style="left:328.20px;top:764.70px;font-size:13.4px;color:#222;transform:scaleX(0.9692);">Tomasz Kwiatkowski</span>
<span class="t" style="left:328.20px;top:788.20px;font-size:12.4px;color:#444;transform:scaleX(1.0030);">Kontrahent planuje rozszerzyć współpracę o dwa regiony - przesłano wstępna wycenę do analizy</span>
<span class="t" style="left:178.60px;top:756.90px;font-size:13.4px;color:#444;-webkit-text-stroke:0.6px currentColor;transform:scaleX(0.9417);">2024-10-13</span>
<span class="t" style="left:212.60px;top:774.20px;font-size:13.4px;color:#444;-webkit-text-stroke:0.6px currentColor;transform:scaleX(0.9380);">22:11</span>
<div style="position:absolute;left:257px;top:766.0px;width:12px;height:12px;border:1.2px solid #c1182b;border-radius:50%;background:#fff"></div>
<div style="position:absolute;left:261.4px;top:770.4px;width:5.2px;height:5.2px;border-radius:50%;background:#c1182b"></div>
<div style="position:absolute;left:1313px;top:127px;width:393px;height:833px;background:#fafafa;"></div>
<div style="position:absolute;left:1313px;top:127px;width:1px;height:833px;background:#e6e6e6;"></div>
<div style="position:absolute;left:1314px;top:127px;width:392px;height:14px;background:linear-gradient(#dcdcdc 0px,#e6e6e6 1.5px,#efefef 3px,rgba(250,250,250,0) 14px)"></div>
<svg style="position:absolute;left:1342px;top:145px;" width="18" height="17" viewBox="0 0 18 17" fill="none"><rect x="1" y="0.8" width="8" height="3" rx="0.6" stroke="#c1182b" stroke-width="1"/><rect x="7.4" y="6.6" width="9" height="3" rx="0.6" stroke="#c1182b" stroke-width="1"/><rect x="7.4" y="12.4" width="9" height="3" rx="0.6" stroke="#c1182b" stroke-width="1"/><path d="M3.4 3.8 V13.9 H7.4 M3.4 8.1 H7.4" stroke="#c1182b" stroke-width="1"/></svg>
<svg style="position:absolute;left:1382px;top:144.5px;" width="18" height="18" viewBox="0 0 18 18" fill="none"><path d="M1 1.2 H16.6 L10.4 8.4 V16.6 L7.4 17.4 V8.4 Z" stroke="#666" stroke-width="1.2" stroke-linejoin="round"/></svg>
<div style="position:absolute;left:1331px;top:173.8px;width:358px;height:1.0px;background:#e2e2e2;"></div>
<div style="position:absolute;left:1331px;top:173px;width:40px;height:2px;background:#c1182b;"></div>
<div style="position:absolute;left:1314px;top:190px;width:392px;height:755px;overflow:hidden">
<div style="position:absolute;left:-1314px;top:-190px;width:1740px;height:996px">
<svg style="position:absolute;left:1341px;top:209.4px;" width="9.5" height="5.4" viewBox="0 0 9.5 5.4" fill="none"><path d="M0.6 0.6 L4.75 4.800000000000001 L8.9 0.6" stroke="#444" stroke-width="1.2"/></svg>
<span class="t" style="left:1360.50px;top:202.70px;font-size:13.4px;color:#c1182b;font-weight:700;-webkit-text-stroke:0;transform:scaleX(0.8695);">Wszystko</span>
<svg style="position:absolute;left:1362px;top:236.52px;" width="9.5" height="5.4" viewBox="0 0 9.5 5.4" fill="none"><path d="M0.6 0.6 L4.75 4.800000000000001 L8.9 0.6" stroke="#444" stroke-width="1.2"/></svg>
<span class="t" style="left:1386.50px;top:229.82px;font-size:13.4px;color:#444;transform:scaleX(0.9051);">Sprzedaż</span>
<svg style="position:absolute;left:1383px;top:263.64px;" width="9.5" height="5.4" viewBox="0 0 9.5 5.4" fill="none"><path d="M0.6 0.6 L4.75 4.800000000000001 L8.9 0.6" stroke="#444" stroke-width="1.2"/></svg>
<span class="t" style="left:1407.60px;top:256.94px;font-size:13.4px;color:#444;transform:scaleX(0.9382);">Dokumenty pierwotne</span>
<svg style="position:absolute;left:1404px;top:290.76px;" width="9.5" height="5.4" viewBox="0 0 9.5 5.4" fill="none"><path d="M0.6 0.6 L4.75 4.800000000000001 L8.9 0.6" stroke="#444" stroke-width="1.2"/></svg>
<span class="t" style="left:1428.00px;top:284.06px;font-size:13.4px;color:#444;transform:scaleX(0.9124);">FV-Faktura sprzedaży</span>
<span class="t" style="left:1449.00px;top:311.18px;font-size:13.4px;color:#444;transform:scaleX(0.9362);">Zaliczkowa</span>
<svg style="position:absolute;left:1425px;top:345.0px;" width="9.5" height="5.4" viewBox="0 0 9.5 5.4" fill="none"><path d="M0.6 0.6 L4.75 4.800000000000001 L8.9 0.6" stroke="#444" stroke-width="1.2"/></svg>
<span class="t" style="left:1449.00px;top:338.30px;font-size:13.4px;color:#444;transform:scaleX(0.9260);">Krajowa w walucie</span>
<span class="t" style="left:1470.00px;top:365.42px;font-size:13.4px;color:#444;transform:scaleX(0.9362);">Zaliczkowa</span>
<span class="t" style="left:1449.00px;top:392.54px;font-size:13.4px;color:#444;transform:scaleX(0.9167);">Wewnętrzna</span>
<span class="t" style="left:1428.00px;top:419.66px;font-size:13.4px;color:#444;transform:scaleX(0.9026);">RZ-Rachunek zwykły</span>
<span class="t" style="left:1428.00px;top:446.78px;font-size:13.4px;color:#444;transform:scaleX(0.8889);">PR-Paragon</span>
<span class="t" style="left:1428.00px;top:473.90px;font-size:13.4px;color:#444;transform:scaleX(0.9021);">DRS-Dzienny raport sprzedaży</span>
<svg style="position:absolute;left:1404px;top:507.72px;" width="9.5" height="5.4" viewBox="0 0 9.5 5.4" fill="none"><path d="M0.6 0.6 L4.75 4.800000000000001 L8.9 0.6" stroke="#444" stroke-width="1.2"/></svg>
<span class="t" style="left:1428.00px;top:501.02px;font-size:13.4px;color:#444;transform:scaleX(0.9117);">FW-Faktura walutowa</span>
<span class="t" style="left:1449.00px;top:528.14px;font-size:13.4px;color:#444;transform:scaleX(0.9362);">Zaliczkowa</span>
<svg style="position:absolute;left:1404px;top:561.96px;" width="9.5" height="5.4" viewBox="0 0 9.5 5.4" fill="none"><path d="M0.6 0.6 L4.75 4.800000000000001 L8.9 0.6" stroke="#444" stroke-width="1.2"/></svg>
<span class="t" style="left:1428.00px;top:555.26px;font-size:13.4px;color:#444;transform:scaleX(0.8754);">FUE-Dostawa UE</span>
<span class="t" style="left:1449.00px;top:582.38px;font-size:13.4px;color:#444;transform:scaleX(0.9362);">Zaliczkowa</span>
<span class="t" style="left:1428.00px;top:609.50px;font-size:13.4px;color:#444;transform:scaleX(0.9138);">FM-Faktura VAT marża</span>
<span class="t" style="left:1428.00px;top:636.62px;font-size:13.4px;color:#444;transform:scaleX(0.9173);">PM-Paragon marża</span>
<span class="t" style="left:1428.00px;top:663.74px;font-size:13.4px;color:#444;transform:scaleX(0.9057);">GV-Sprzedaż w grupie VAT</span>
<svg style="position:absolute;left:1383px;top:697.5600000000001px;" width="9.5" height="5.4" viewBox="0 0 9.5 5.4" fill="none"><path d="M0.6 0.6 L4.75 4.800000000000001 L8.9 0.6" stroke="#444" stroke-width="1.2"/></svg>
<span class="t" style="left:1407.60px;top:690.86px;font-size:13.4px;color:#444;transform:scaleX(0.9324);">Dokumenty korygujące</span>
<svg style="position:absolute;left:1404px;top:724.68px;" width="9.5" height="5.4" viewBox="0 0 9.5 5.4" fill="none"><path d="M0.6 0.6 L4.75 4.800000000000001 L8.9 0.6" stroke="#444" stroke-width="1.2"/></svg>
<span class="t" style="left:1428.00px;top:717.98px;font-size:13.4px;color:#444;transform:scaleX(0.9128);">FVk-Faktura sprzedaży-korekta</span>
<svg style="position:absolute;left:1425px;top:751.8px;" width="9.5" height="5.4" viewBox="0 0 9.5 5.4" fill="none"><path d="M0.6 0.6 L4.75 4.800000000000001 L8.9 0.6" stroke="#444" stroke-width="1.2"/></svg>
<span class="t" style="left:1449.00px;top:745.10px;font-size:13.4px;color:#444;transform:scaleX(0.9367);">Korekta walutowa</span>
<span class="t" style="left:1470.00px;top:772.22px;font-size:13.4px;color:#444;transform:scaleX(0.9260);">Krajowa w walucie</span>
<span class="t" style="left:1449.00px;top:799.34px;font-size:13.4px;color:#444;transform:scaleX(0.9167);">Wewnętrzna</span>
<span class="t" style="left:1449.00px;top:826.46px;font-size:13.4px;color:#444;transform:scaleX(0.9275);">Korekta zbiorcza</span>
<span class="t" style="left:1428.00px;top:853.58px;font-size:13.4px;color:#444;transform:scaleX(0.9048);">PRk-Paragon-korekta</span>
<span class="t" style="left:1428.00px;top:880.70px;font-size:13.4px;color:#444;transform:scaleX(0.9199);">FMk-Faktura VAT marża-korekta</span>
<span class="t" style="left:1428.00px;top:907.82px;font-size:13.4px;color:#444;transform:scaleX(0.9097);">RZk-Rachunek zwykły-korekta</span>
<span class="t" style="left:1428.00px;top:934.94px;font-size:13.4px;color:#444;transform:scaleX(0.9202);">PMk-Paragon marża-korekta</span>
</div></div>
<div style="position:absolute;left:1304.5px;top:535.5px;width:14px;height:50px;border:1px solid #e2e2e2;border-radius:7px;background:#f4f4f4"></div>
<svg style="position:absolute;left:1308.5px;top:555.5px;" width="7" height="12" viewBox="0 0 7 12" fill="none"><path d="M0.8 0.8 L6 6 L0.8 11.2" stroke="#444" stroke-width="1.2"/></svg>
<div style="position:absolute;left:923px;top:357px;width:273px;height:560px;border-radius:15px;box-shadow:0 8px 22px 6px rgba(0,0,0,0.15)"></div>
<div style="position:absolute;left:923px;top:357px;width:273px;height:560px;border-radius:15px;overflow:hidden;background:#f8f8f8">
<div style="position:absolute;left:-923px;top:-357px;width:1740px;height:996px">
<div style="position:absolute;left:923px;top:357px;width:273px;height:27px;background:#232629;"></div>
<span class="t" style="left:929.10px;top:364.35px;font-size:10.9px;color:#fff;-webkit-text-stroke:0.12px currentColor;transform:scaleX(0.8897);">Solidna Firma Sp. z o.o.</span>
<svg style="position:absolute;left:1041px;top:368.4px;" width="7.5" height="4.2" viewBox="0 0 7.5 4.2" fill="none"><path d="M0.6 0.6 L3.75 3.6 L6.9 0.6" stroke="#ddd" stroke-width="1.1"/></svg>
<div style="position:absolute;left:1115.6px;top:365.2px;width:10px;height:10px;border-radius:50%;background:#e2e36b"></div>
<span class="t" style="left:1132.00px;top:364.35px;font-size:10.9px;color:#fff;-webkit-text-stroke:0.3px currentColor;transform:scaleX(0.8582);">MAGPOZ</span>
<svg style="position:absolute;left:1180.5px;top:368.4px;" width="7.5" height="4.2" viewBox="0 0 7.5 4.2" fill="none"><path d="M0.6 0.6 L3.75 3.6 L6.9 0.6" stroke="#ddd" stroke-width="1.1"/></svg>
<div style="position:absolute;left:923px;top:384px;width:273px;height:30px;background:#31373e;"></div>
<div style="position:absolute;left:933px;top:394.2px;width:10px;height:1.1000000000000227px;background:#eee;"></div>
<div style="position:absolute;left:933px;top:397.6px;width:10px;height:1.1000000000000227px;background:#eee;"></div>
<div style="position:absolute;left:933px;top:401px;width:10px;height:1.1000000000000227px;background:#eee;"></div>
<div style="position:absolute;left:933px;top:404.4px;width:10px;height:1.1000000000000227px;background:#eee;"></div>
<span class="t" style="left:954.00px;top:391.10px;font-size:13.4px;color:#fff;transform:scaleX(0.9226);">wapro any</span>
<span class="t" style="left:1019.60px;top:391.10px;font-size:13.4px;color:#fff;transform:scaleX(0.9179);">here</span>
<svg style="position:absolute;left:1010.3px;top:394.2px;" width="9.6" height="8.3" viewBox="0 0 12 10" fill="none"><path d="M4.2 9.9 A4 4 0 0 1 2.9 2.2 A2.9 2.9 0 0 1 8.7 3.2 A2.9 2.9 0 0 1 7.9 5.4 M7.6 4.3 A3 3 0 1 1 8 9.9 L4.2 9.9" stroke="#fff" stroke-width="1.5" stroke-linecap="round"/></svg>
<svg style="position:absolute;left:1142px;top:391px;" width="17" height="17" viewBox="0 0 17 17" fill="none"><circle cx="6.6" cy="6.6" r="5.4" stroke="#fff" stroke-width="1.2"/><path d="M10.4 10.4 L15.4 15.4" stroke="#fff" stroke-width="1.8"/></svg>
<svg style="position:absolute;left:1172.5px;top:391px;" width="16" height="16" viewBox="0 0 16 16" fill="none"><circle cx="8" cy="8" r="7.2" stroke="#fff" stroke-width="1.1"/><path d="M8 3.4 C6.1 3.4 5.1 4.8 5.1 6.4 C5.1 7.8 5.8 8.8 6.6 9.3 L6.6 10 C5 10.4 3.7 11 2.9 12.3 M8 3.4 C9.9 3.4 10.9 4.8 10.9 6.4 C10.9 7.8 10.2 8.8 9.4 9.3 L9.4 10 C11 10.4 12.3 11 13.1 12.3" stroke="#fff" stroke-width="1.1"/></svg>
<div style="position:absolute;left:923px;top:414px;width:273px;height:40.5px;background:#fff;"></div>
<span class="t" style="left:932.60px;top:428.30px;font-size:12.4px;color:#222;font-weight:700;-webkit-text-stroke:0;transform:scaleX(0.9132);">Dodawanie dokumentu handlowego</span>
<svg style="position:absolute;left:1170px;top:426.5px;" width="15" height="15" viewBox="0 0 15 15" fill="none"><path d="M7.4 13.8 L4 10.4 C3.3 9.7 2.9 8.8 2.9 7.8 C2.9 5.4 5 3.6 7.4 3.6 C9.8 3.6 11.9 5.4 11.9 7.8 C11.9 8.8 11.5 9.7 10.8 10.4 Z" stroke="#c1182b" stroke-width="1" stroke-linejoin="round"/><path d="M7.4 0.6 V2 M2.4 2.6 L3.3 3.5 M12.4 2.6 L11.5 3.5 M0.4 7.6 H1.8 M13 7.6 H14.4" stroke="#c1182b" stroke-width="0.9" stroke-linecap="round"/></svg>
<div style="position:absolute;left:923px;top:454.5px;width:273px;height:10px;background:linear-gradient(#e6e6e6,rgba(245,245,245,0))"></div>
<div style="position:absolute;left:1047px;top:442px;width:24px;height:24px;border-radius:50%;background:#fff;box-shadow:0 3px 3px -1px rgba(0,0,0,0.07)"></div>
<svg style="position:absolute;left:1053.7px;top:451.8px;" width="11" height="6.4" viewBox="0 0 11 6.4" fill="none"><path d="M0.6 0.6 L5.5 5.800000000000001 L10.4 0.6" stroke="#444" stroke-width="1.1"/></svg>
<div style="position:absolute;left:923px;top:476px;width:273px;height:362px;border-radius:8px;background:#fff;box-shadow:0 1px 3px rgba(0,0,0,0.12)"></div>
<span class="t" style="left:932.80px;top:490.00px;font-size:11.6px;color:#444;-webkit-text-stroke:0.3px currentColor;transform:scaleX(1.0365);">Dane nagłówkowe</span>
<svg style="position:absolute;left:1169px;top:491px;" width="11.5" height="6.2" viewBox="0 0 11.5 6.2" fill="none"><path d="M0.6 5.6000000000000005 L5.75 0.6 L10.9 5.6000000000000005" stroke="#555" stroke-width="1.1"/></svg>
<span class="t" style="left:932.80px;top:516.55px;font-size:10.9px;color:#222;-webkit-text-stroke:0.3px currentColor;transform:scaleX(0.9696);">Typ dokumentu</span>
<div style="position:absolute;left:932.4px;top:535.5px;width:252px;height:22.100000000000023px;border:1px solid #e6e6e6;border-radius:3px;background:#f5f5f5"></div>
<span class="t" style="left:940.00px;top:541.90px;font-size:10.9px;color:#555;-webkit-text-stroke:0.12px currentColor;transform:scaleX(0.9411);">Sprzedaż</span>
<span class="t" style="left:932.50px;top:570.75px;font-size:10.9px;color:#222;-webkit-text-stroke:0.3px currentColor;transform:scaleX(0.9292);">Rodzaj</span>
<div style="position:absolute;left:932.4px;top:589.7px;width:252px;height:21.799999999999955px;border:1px solid #e6e6e6;border-radius:3px;background:#f5f5f5"></div>
<span class="t" style="left:940.00px;top:595.95px;font-size:10.9px;color:#555;-webkit-text-stroke:0.12px currentColor;transform:scaleX(0.9567);">Faktura sprzedaży</span>
<span class="t" style="left:932.50px;top:620.00px;font-size:9px;color:#c1182b;font-weight:700;-webkit-text-stroke:0;">*</span>
<span class="t" style="left:937.40px;top:624.55px;font-size:10.9px;color:#222;-webkit-text-stroke:0.3px currentColor;transform:scaleX(0.9747);">Data wystawienia</span>
<div style="position:absolute;left:932.4px;top:643.3px;width:252px;height:22.300000000000068px;border:1px solid #b4b4b4;border-radius:3px;background:#fff"></div>
<span class="t" style="left:958.30px;top:649.80px;font-size:10.9px;color:#555;-webkit-text-stroke:0.12px currentColor;transform:scaleX(0.9604);">2024-03-12</span>
<svg style="position:absolute;left:937.5px;top:649px;" width="13" height="13" viewBox="0 0 13 13" fill="none"><rect x="0.6" y="1.6" width="11.8" height="10.8" stroke="#777" stroke-width="1"/><path d="M0.6 4.6 H12.4 M3.4 0.4 V2.6 M9.6 0.4 V2.6" stroke="#777" stroke-width="1"/><path d="M3 7 H4.4 M5.8 7 H7.2 M8.6 7 H10" stroke="#777" stroke-width="1.2"/></svg>
<div style="position:absolute;left:1145.6px;top:655px;width:11.900000000000091px;height:1.1000000000000227px;background:#555;"></div>
<svg style="position:absolute;left:1168.5px;top:649px;" width="12.5" height="12.5" viewBox="0 0 12.5 12.5" fill="none"><path d="M6.25 0.6 V11.9 M0.6 6.25 H11.9" stroke="#555" stroke-width="1.1"/></svg>
<span class="t" style="left:932.40px;top:678.55px;font-size:10.9px;color:#222;-webkit-text-stroke:0.3px currentColor;transform:scaleX(0.9640);">Numer</span>
<div style="position:absolute;left:932.4px;top:697.2px;width:252px;height:22.0px;border:1px solid #e6e6e6;border-radius:3px;background:#f5f5f5"></div>
<span class="t" style="left:940.00px;top:703.55px;font-size:10.9px;color:#555;-webkit-text-stroke:0.12px currentColor;transform:scaleX(0.9140);">&lt;auto&gt;</span>
<span class="t" style="left:932.50px;top:728.00px;font-size:9px;color:#c1182b;font-weight:700;-webkit-text-stroke:0;">*</span>
<span class="t" style="left:937.40px;top:732.55px;font-size:10.9px;color:#222;-webkit-text-stroke:0.3px currentColor;transform:scaleX(0.9759);">Kontrahent</span>
<svg style="position:absolute;left:1171.5px;top:730.5px;" width="15" height="15" viewBox="0 0 15 15" fill="none"><path d="M7.4 13.8 L4 10.4 C3.3 9.7 2.9 8.8 2.9 7.8 C2.9 5.4 5 3.6 7.4 3.6 C9.8 3.6 11.9 5.4 11.9 7.8 C11.9 8.8 11.5 9.7 10.8 10.4 Z" stroke="#c1182b" stroke-width="1" stroke-linejoin="round"/><path d="M7.4 0.6 V2 M2.4 2.6 L3.3 3.5 M12.4 2.6 L11.5 3.5 M0.4 7.6 H1.8 M13 7.6 H14.4" stroke="#c1182b" stroke-width="0.9" stroke-linecap="round"/></svg>
<div style="position:absolute;left:932.4px;top:751.4px;width:252px;height:21.600000000000023px;border:1px solid #b4b4b4;border-radius:3px;background:#fff"></div>
<span class="t" style="left:940.00px;top:757.55px;font-size:10.9px;color:#555;-webkit-text-stroke:0.12px currentColor;transform:scaleX(0.9713);">Kowalski Piotr &quot;Kowalix&quot; S.A&gt;</span>
<svg style="position:absolute;left:1171px;top:761.2px;" width="7.5" height="4.2" viewBox="0 0 7.5 4.2" fill="none"><path d="M0.6 0.6 L3.75 3.6 L6.9 0.6" stroke="#555" stroke-width="1.1"/></svg>
<span class="t" style="left:932.50px;top:782.00px;font-size:9px;color:#c1182b;font-weight:700;-webkit-text-stroke:0;">*</span>
<span class="t" style="left:937.40px;top:786.55px;font-size:10.9px;color:#222;-webkit-text-stroke:0.3px currentColor;transform:scaleX(0.9665);">Sumowanie</span>
<div style="position:absolute;left:932.4px;top:805.2px;width:252px;height:21.399999999999977px;border:1px solid #b4b4b4;border-radius:3px;background:#fff"></div>
<span class="t" style="left:940.00px;top:811.25px;font-size:10.9px;color:#555;-webkit-text-stroke:0.12px currentColor;transform:scaleX(1.0181);">Netto</span>
<span class="t" style="left:944.20px;top:859.00px;font-size:11.4px;color:#c1182b;-webkit-text-stroke:0.12px currentColor;transform:scaleX(0.9335);">Pozycje dokumentu</span>
<span class="t" style="left:1056.30px;top:859.00px;font-size:11.4px;color:#555;-webkit-text-stroke:0.12px currentColor;transform:scaleX(0.9536);">Informacje nagłówkowe</span>
<span class="t" style="left:1188.00px;top:859.00px;font-size:11.4px;color:#555;-webkit-text-stroke:0.12px currentColor;">Uwagi</span>
<div style="position:absolute;left:923px;top:874px;width:273px;height:1px;background:#e8e8e8;"></div>
<div style="position:absolute;left:923px;top:875px;width:273px;height:42px;background:#fff;"></div>
<div style="position:absolute;left:938.45px;top:894.8px;width:2.1px;height:2.1px;border-radius:50%;background:#666"></div>
<div style="position:absolute;left:943.1500000000001px;top:894.8px;width:2.1px;height:2.1px;border-radius:50%;background:#666"></div>
<div style="position:absolute;left:947.85px;top:894.8px;width:2.1px;height:2.1px;border-radius:50%;background:#666"></div>
<div style="position:absolute;left:1050.3px;top:883px;width:63.5px;height:24.8px;border-radius:3px;background:#c1182b"></div>
<span class="t" style="left:1066.30px;top:889.00px;font-size:11.4px;color:#fff;-webkit-text-stroke:0.12px currentColor;transform:scaleX(0.9389);">Zapisz</span>
<div style="position:absolute;left:1123px;top:883px;width:63.3px;height:24.8px;border-radius:3px;background:#e3e3e3"></div>
<span class="t" style="left:1140.00px;top:889.00px;font-size:11.4px;color:#333;-webkit-text-stroke:0.12px currentColor;transform:scaleX(0.9317);">Anuluj</span>
</div></div>
</div></div>
</body></html>
